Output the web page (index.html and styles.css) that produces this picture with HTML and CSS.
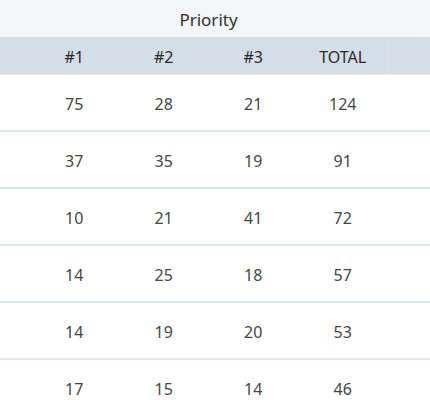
FILE: index.html
```html
<!DOCTYPE html>
<html>
<head>
<meta charset="utf-8">
<link rel="stylesheet" href="styles.css">
</head>
<body>
<div class="table">
  <div class="group-row">
    <div class="spacer"></div>
    <div class="group-title">Priority</div>
    <div class="spacer"></div>
  </div>
  <div class="row head">
    <div class="cell edge"></div>
    <div class="cell">#1</div>
    <div class="cell">#2</div>
    <div class="cell">#3</div>
    <div class="cell">TOTAL</div>
    <div class="cell edge right"></div>
  </div>
  <div class="row"><div class="cell edge"></div><div class="cell">75</div><div class="cell">28</div><div class="cell">21</div><div class="cell">124</div><div class="cell edge"></div></div>
  <div class="row"><div class="cell edge"></div><div class="cell">37</div><div class="cell">35</div><div class="cell">19</div><div class="cell">91</div><div class="cell edge"></div></div>
  <div class="row"><div class="cell edge"></div><div class="cell">10</div><div class="cell">21</div><div class="cell">41</div><div class="cell">72</div><div class="cell edge"></div></div>
  <div class="row"><div class="cell edge"></div><div class="cell">14</div><div class="cell">25</div><div class="cell">18</div><div class="cell">57</div><div class="cell edge"></div></div>
  <div class="row"><div class="cell edge"></div><div class="cell">14</div><div class="cell">19</div><div class="cell">20</div><div class="cell">53</div><div class="cell edge"></div></div>
  <div class="row"><div class="cell edge"></div><div class="cell">17</div><div class="cell">15</div><div class="cell">14</div><div class="cell">46</div><div class="cell edge"></div></div>
</div>
</body>
</html>
```
FILE: styles.css
```css
html, body {
  margin: 0;
  padding: 0;
  background: #ffffff;
}
body {
  width: 430px;
  height: 400px;
  overflow: hidden;
  font-family: "Noto Sans", "Open Sans", sans-serif;
}
.table {
  display: flex;
  flex-direction: column;
}
.group-row {
  display: grid;
  grid-template-columns: 29.5px 358px 1fr;
  height: 37px;
  background: #f4f5f8;
}
.group-title {
  display: flex;
  align-items: center;
  justify-content: center;
  padding-top: 2px;
  font-size: 17px;
  color: #2f2f2f;
}
.row {
  display: grid;
  grid-template-columns: 29.5px repeat(4, 89.5px) 1fr;
  height: 55px;
  border-bottom: 2px solid #dde5ee;
}
.row.head {
  height: 37px;
  background: #d4dee6;
  border-bottom: 1px solid #e6ecf2;
}
.cell {
  display: flex;
  align-items: center;
  justify-content: center;
  padding-top: 3px;
  font-size: 16px;
  color: #454545;
}
.head .cell {
  padding-top: 3px;
  color: #2a2a2a;
}
.head .cell.right {
  border-left: 1px solid #dce4eb;
}
```
